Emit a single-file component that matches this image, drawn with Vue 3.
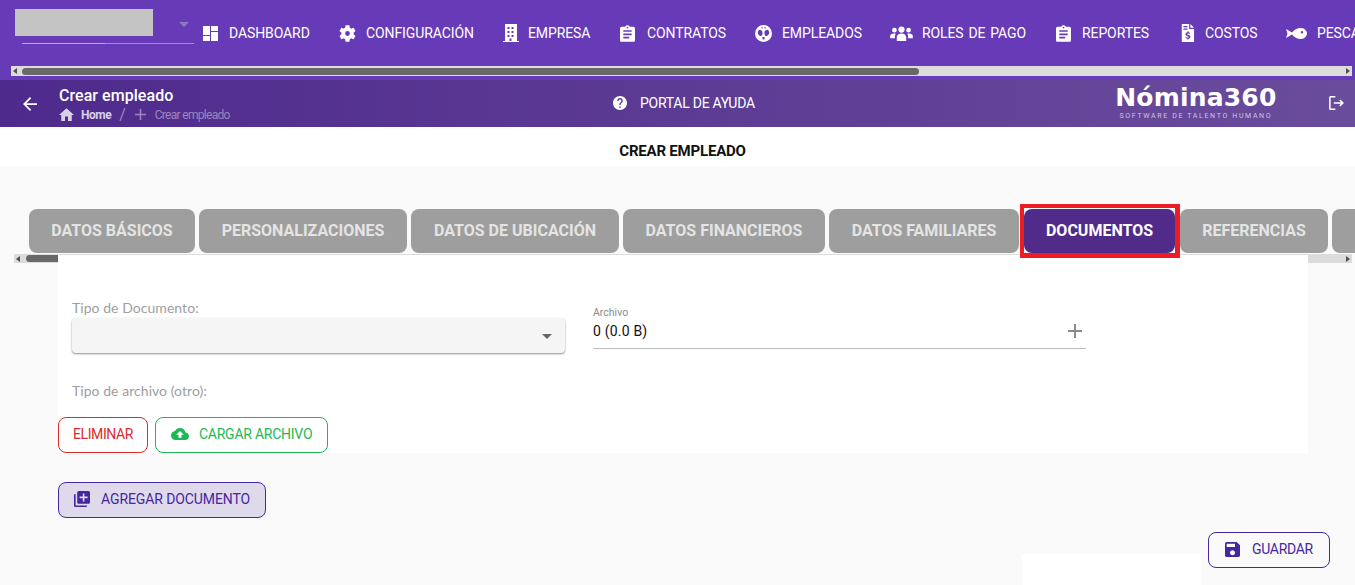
<script setup>
const clipboard = 'M19 3h-4.18C14.4 1.84 13.3 1 12 1c-1.3 0-2.4.84-2.82 2H5c-1.1 0-2 .9-2 2v14c0 1.1.9 2 2 2h14c1.1 0 2-.9 2-2V5c0-1.1-.9-2-2-2zm-7 0c.55 0 1 .45 1 1s-.45 1-1 1-1-.45-1-1 .45-1 1-1zm2 14H7v-2h7v2zm3-4H7v-2h10v2zm0-4H7V7h10v2z'
const menu = [
  { label: 'DASHBOARD', span: 136, box: 26, w: 15, h: 15, vb: '0 0 15 15', d: 'M0 0h7v9H0zM0 10h7v5H0zM8 0h7v5H8zM8 6h7v9H8z' },
  { label: 'CONFIGURACIÓN', span: 164, box: 27, w: 17, h: 17, vb: '2 2 20 20', d: 'M19.14 12.94c.04-.3.06-.61.06-.94 0-.32-.02-.64-.07-.94l2.03-1.58c.18-.14.23-.41.12-.61l-1.92-3.32c-.12-.22-.37-.29-.59-.22l-2.39.96c-.5-.38-1.03-.7-1.62-.94l-.36-2.54c-.04-.24-.24-.41-.48-.41h-3.84c-.24 0-.43.17-.47.41l-.36 2.54c-.59.24-1.13.57-1.62.94l-2.39-.96c-.22-.08-.47 0-.59.22L2.74 8.87c-.12.21-.08.47.12.61l2.03 1.58c-.05.3-.09.63-.09.94s.02.64.07.94l-2.03 1.58c-.18.14-.23.41-.12.61l1.92 3.32c.12.22.37.29.59.22l2.39-.96c.5.38 1.03.7 1.62.94l.36 2.54c.05.24.24.41.48.41h3.84c.24 0 .44-.17.47-.41l.36-2.54c.59-.24 1.13-.56 1.62-.94l2.39.96c.22.08.47 0 .59-.22l1.92-3.32c.12-.22.07-.47-.12-.61l-2.01-1.58zM12 14.8a2.8 2.8 0 1 1 0-5.6 2.8 2.8 0 0 1 0 5.6z' },
  { label: 'EMPRESA', span: 117, box: 25, w: 16, h: 18, vb: '0 0 16 18', d: 'M2 0h12v17h2v1H0v-1h2V0zm2.5 3v2h2V3h-2zm4 0v2h2V3h-2zm-4 4v2h2V7h-2zm4 0v2h2V7h-2zm-4 4v2h2v-2h-2zm4 0v2h2v-2h-2zm-2 3.5V17h2v-2.5h-2z' },
  { label: 'CONTRATOS', span: 135, box: 27, w: 15, h: 17, vb: '3 1 18 20', d: clipboard },
  { label: 'EMPLEADOS', span: 135, box: 27, w: 17, h: 17, vb: '2 2 20 20', d: 'M12 2a10 10 0 1 0 0 20 10 10 0 0 0 0-20zM6.8 8c1.6-.9 3.6.3 4 2.400.3 2-.4 4.200-1.800 4.500-1.500.3-3-1-3.500-2.800C5 10.500 5.500 8.800 6.800 8zm10.400 0c1.300.8 1.800 2.500 1.300 4.100-.5 1.800-2 3.100-3.500 2.800-1.400-.3-2.100-2.500-1.800-4.500.4-2.100 2.400-3.300 4-2.400zM10.500 16h3l-.5 3h-2l-.5-3zM9.500 4.500h1.500V6H9.500V4.500zm3.500 0h1.500V6H13V4.500z' },
  { label: 'ROLES DE PAGO', span: 166, box: 32, w: 23, h: 17, vb: '0 3 24 18', d: 'M12 4.5a3.3 3.3 0 1 1 0 6.6 3.3 3.3 0 0 1 0-6.600zM4.500 6a2.500 2.500 0 1 1 0 5 2.500 2.500 0 0 1 0-5zm15 0a2.500 2.500 0 1 1 0 5 2.500 2.500 0 0 1 0-5zM7 20v-4c0-2.500 2-4 5-4s5 1.500 5 4v4H7zM0 17v-2c0-2 1.500-3 4-3 .8 0 1.500.1 2 .3-.7.8-1 1.800-1 2.700v2H0zm24 0h-5v-2c0-.9-.3-1.900-1-2.700.5-.2 1.200-.3 2-.3 2.500 0 4 1 4 3v2z' },
  { label: 'REPORTES', span: 124, box: 26, w: 15, h: 17, vb: '3 1 18 20', d: clipboard },
  { label: 'COSTOS', span: 106, box: 25, w: 15, h: 18, vb: '4 1 16 22', d: 'M5 1h9v6h6v16H5V1zm10.500 0L20 5.500h-4.500V1zM7 3.500v1.500h5V3.500H7zm0 3v1.500h5V6.500H7zM12 10v1.200c-1.500.2-2.500 1.100-2.500 2.300 0 1.500 1.300 2 2.700 2.400 1 .3 1.300.5 1.300 1 0 .4-.5.7-1.400.7-.8 0-1.500-.3-2-.8l-.7 1.100c.6.6 1.500 1 2.500 1.100V20h1.300v-1.100c1.500-.2 2.400-1.100 2.400-2.300 0-1.500-1.300-2-2.700-2.400-1-.3-1.300-.5-1.300-1 0-.4.5-.7 1.200-.7.6 0 1.200.2 1.700.6l.7-1.100c-.5-.4-1.200-.7-2-.8V10H12z' },
  { label: 'PESCA', span: 120, box: 31, w: 21, h: 11, vb: '0 0 21 11', d: 'M0 1l6 3.500C8 2 11 0 15 0c3.500 0 6 3 6 5.500S18.500 11 15 11c-4 0-7-2-9-4.500L0 10l1.500-4.500L0 1zm16 2a1.200 1.200 0 1 0 0 2.400 1.200 1.200 0 0 0 0-2.400z' }
]
const tabs = [
  { label: 'DATOS BÁSICOS', width: 166 },
  { label: 'PERSONALIZACIONES', width: 208 },
  { label: 'DATOS DE UBICACIÓN', width: 208 },
  { label: 'DATOS FINANCIEROS', width: 202 },
  { label: 'DATOS FAMILIARES', width: 190 },
  { label: 'DOCUMENTOS', width: 151, active: true },
  { label: 'REFERENCIAS', width: 148 },
  { label: '', width: 100 }
]
</script>

<template>
  <div class="page">
    <nav class="topnav">
      <div class="topnav-row">
        <div class="company">
          <div class="company-box"></div>
          <span class="company-arrow"></span>
        </div>
        <a v-for="m in menu" :key="m.label" class="nav-item" :style="{ width: m.span + 'px' }">
          <span class="nav-icon" :style="{ width: m.box + 'px' }">
            <svg :width="m.w" :height="m.h" :viewBox="m.vb" fill="#fff"><path :d="m.d" fill-rule="evenodd" /></svg>
          </span>
          <span>{{ m.label }}</span>
        </a>
      </div>
      <div class="hbar top-bar"><i class="arrow-l"></i><b class="thumb top-thumb"></b><i class="arrow-r"></i></div>
    </nav>

    <header class="subbar">
      <button class="back">
        <svg width="14" height="14" viewBox="4 4 16 16" fill="#fff"><path d="M20 11H7.83l5.59-5.59L12 4l-8 8 8 8 1.41-1.41L7.83 13H20v-2z" /></svg>
      </button>
      <div class="crumbs">
        <div class="crumbs-title">Crear empleado</div>
        <div class="crumbs-path">
          <svg width="15" height="13" viewBox="2 3 20 17" fill="#d9d2e6"><path d="M10 20v-6h4v6h5v-8h3L12 3 2 12h3v8z" /></svg>
          <span class="home">Home</span>
          <span class="sep">/</span>
          <svg width="11" height="11" viewBox="5 5 14 14" fill="#9b86bd"><path d="M19 13h-6v6h-2v-6H5v-2h6V5h2v6h6v2z" /></svg>
          <span class="current">Crear empleado</span>
        </div>
      </div>
      <a class="help">
        <svg width="14" height="14" viewBox="2 2 20 20" fill="#fff"><path d="M12 2C6.48 2 2 6.48 2 12s4.48 10 10 10 10-4.48 10-10S17.52 2 12 2zm1 17h-2v-2h2v2zm2.07-7.75l-.9.92C13.45 12.9 13 13.5 13 15h-2v-.5c0-1.1.45-2.1 1.17-2.83l1.24-1.26c.37-.36.59-.86.59-1.41 0-1.1-.9-2-2-2s-2 .9-2 2H8c0-2.21 1.79-4 4-4s4 1.79 4 4c0 .88-.36 1.68-.93 2.25z" /></svg>
        <span>PORTAL DE AYUDA</span>
      </a>
      <div class="logo">
        <div class="logo-name">Nómina360</div>
        <div class="logo-sub">SOFTWARE DE TALENTO HUMANO</div>
      </div>
      <button class="logout">
        <svg width="15" height="14" viewBox="3 3 19 18" fill="#fff"><path d="M5 5h6V3H5a2 2 0 0 0-2 2v14a2 2 0 0 0 2 2h6v-2H5V5zm17 7l-4.500-4.500-1.400 1.400L18.200 11H9v2h9.200l-2.100 2.100 1.400 1.400L22 12z" /></svg>
      </button>
    </header>

    <div class="page-title">CREAR EMPLEADO</div>

    <main class="body">
      <div class="tabs">
        <button
          v-for="t in tabs"
          :key="t.label"
          class="tab"
          :class="{ active: t.active }"
          :style="{ width: t.width + 'px' }"
        >{{ t.label }}</button>
      </div>
      <div class="hbar tabs-bar"><i class="arrow-l"></i><b class="thumb tabs-thumb"></b><i class="arrow-r"></i></div>

      <section class="card">
        <div class="form-row">
          <div class="field-select">
            <label>Tipo de Documento:</label>
            <div class="select"><span class="select-arrow"></span></div>
          </div>
          <div class="field-file">
            <label>Archivo</label>
            <div class="file-line">
              <span>0 (0.0 B)</span>
              <svg width="14" height="14" viewBox="5 5 14 14" fill="#8a8a8a"><path d="M19 13h-6v6h-2v-6H5v-2h6V5h2v6h6v2z" /></svg>
            </div>
          </div>
        </div>
        <div class="other-label">Tipo de archivo (otro):</div>
        <div class="actions">
          <button class="btn btn-red">ELIMINAR</button>
          <button class="btn btn-green">
            <svg width="18" height="14" viewBox="0 4 24 16" fill="#1db954"><path d="M19.35 10.04C18.67 6.59 15.64 4 12 4 9.11 4 6.6 5.64 5.35 8.04 2.34 8.36 0 10.91 0 14c0 3.31 2.69 6 6 6h13c2.76 0 5-2.24 5-5 0-2.64-2.05-4.78-4.65-4.96zM14 13v4h-4v-4H7l5-5 5 5h-3z" /></svg>
            CARGAR ARCHIVO
          </button>
        </div>
      </section>

      <button class="btn btn-add">
        <svg width="16" height="16" viewBox="2 2 20 20" fill="#4527a0"><path d="M4 6H2v14c0 1.1.9 2 2 2h14v-2H4V6zm16-4H8c-1.1 0-2 .9-2 2v12c0 1.1.9 2 2 2h12c1.1 0 2-.9 2-2V4c0-1.1-.9-2-2-2zm-1 9h-4v4h-2v-4H9V9h4V5h2v4h4v2z" /></svg>
        AGREGAR DOCUMENTO
      </button>

      <div class="footer-row">
        <div class="white-patch"></div>
        <button class="btn btn-save">
          <svg width="15" height="15" viewBox="3 3 18 18" fill="#4527a0"><path d="M17 3H5c-1.11 0-2 .9-2 2v14c0 1.1.89 2 2 2h14c1.1 0 2-.9 2-2V7l-4-4zm-5 16c-1.66 0-3-1.34-3-3s1.34-3 3-3 3 1.34 3 3-1.34 3-3 3zm3-10H5V5h10v4z" /></svg>
          GUARDAR
        </button>
      </div>
    </main>
  </div>
</template>

<style>
html, body { margin: 0; overflow: hidden; }
</style>

<style scoped>
.page {
  width: 1355px;
  height: 585px;
  overflow: hidden;
  background: #fafafa;
  font-family: Roboto, "Liberation Sans", sans-serif;
}

.topnav {
  height: 80px;
  background: #673ab7;
  overflow: hidden;
}
.topnav-row {
  display: flex;
  height: 66px;
  white-space: nowrap;
}
.company {
  position: relative;
  flex: none;
  width: 203px;
}
.company-box {
  width: 138px;
  height: 27px;
  margin: 9px 0 0 15px;
  background: #c4c4c4;
}
.company::after {
  content: "";
  position: absolute;
  left: 22px;
  top: 43px;
  width: 172px;
  height: 1px;
  background: linear-gradient(90deg, #bcaed8 48%, #a48fcb 48%);
}
.company-arrow {
  position: absolute;
  left: 179px;
  top: 22px;
  border: 5px solid transparent;
  border-top-color: #8d78b8;
  border-bottom: 0;
}
.nav-item {
  flex: none;
  display: flex;
  align-items: center;
  height: 20px;
  margin-top: 23px;
  color: #fff;
  font-size: 14px;
  letter-spacing: -0.1px;
  word-spacing: 1.5px;
}
.nav-icon {
  flex: none;
  display: flex;
  align-items: center;
}

.hbar {
  display: flex;
  align-items: center;
  background: #dcdcdc;
  height: 10px;
  position: relative;
}
.top-bar { margin: 0 3px 0 11px; }
.thumb {
  display: block;
  height: 7px;
  background: #686868;
  border-radius: 4px;
}
.top-thumb { width: 897px; margin-left: 1px; }
.tabs-bar { margin: 1px 3px 0 14px; height: 9px; }
.tabs-thumb { width: 40px; margin-left: 2px; }
.arrow-l, .arrow-r {
  flex: none;
  width: 0;
  height: 0;
  border: 3px solid transparent;
}
.arrow-l { border-right: 4px solid #505050; border-left: 0; margin: 0 4px 0 2px; }
.arrow-r { position: absolute; right: 2px; border-left: 4px solid #505050; border-right: 0; }

.subbar {
  height: 47px;
  display: flex;
  align-items: center;
  background: linear-gradient(90deg, #4e2a8c, #6a4c9c);
  color: #fff;
}
.subbar button {
  background: none;
  border: 0;
  padding: 0;
  display: flex;
}
.back { margin: 0 0 0 23px; }
.crumbs { width: 300px; margin-left: 22px; padding-top: 2px; }
.crumbs-title {
  font-size: 16px;
  font-weight: 500;
  line-height: 18px;
  letter-spacing: 0.05px;
}
.crumbs-path {
  display: flex;
  align-items: center;
  gap: 6px;
  height: 16px;
  margin-top: 2px;
  font-size: 12px;
}
.home { margin-left: 1px; color: #d9d2e6; font-weight: 700; letter-spacing: -0.5px; }
.sep { color: #9b86bd; font-size: 16px; margin: 0 3px 0 2px; }
.current { color: #9b86bd; letter-spacing: -0.7px; margin-left: 3px; }
.help {
  display: flex;
  align-items: center;
  gap: 13px;
  margin: 0 0 2px 254px;
  font-size: 14px;
  letter-spacing: -0.25px;
  word-spacing: 0;
}
.logo {
  flex: none;
  width: 162px;
  margin: 0 0 2px 360px;
  text-align: center;
}
.logo-name {
  margin-bottom: 1px;
  font-family: "DejaVu Sans", sans-serif;
  font-size: 25px;
  font-weight: 700;
  line-height: 26px;
  letter-spacing: 0.2px;
  white-space: nowrap;
}
.logo-sub {
  color: #cfc5e0;
  font-size: 7px;
  line-height: 9px;
  letter-spacing: 1.65px;
  white-space: nowrap;
}
.subbar .logout { margin: 0 0 2px 52px; }

.page-title {
  height: 39px;
  padding-left: 10px;
  background: #fff;
  color: #111;
  font-size: 15px;
  font-weight: 700;
  line-height: 48px;
  text-align: center;
  letter-spacing: -0.2px;
}

.body {
  display: flex;
  flex-direction: column;
  align-items: stretch;
}
.tabs {
  position: relative;
  z-index: 2;
  display: flex;
  gap: 4px;
  height: 44px;
  margin-top: 43px;
  padding-left: 29px;
  white-space: nowrap;
}
.tab {
  flex: none;
  height: 44px;
  padding: 0 0 2px;
  border: 0;
  border-radius: 8px;
  background: #9e9e9e;
  color: #e4e4e4;
  font-family: inherit;
  font-size: 16px;
  font-weight: 700;
}
.tab.active {
  position: relative;
  margin: 0 1px;
  background: #512b8a;
  color: #fff;
}
.tab.active::after {
  content: "";
  position: absolute;
  inset: -5px -5px -5px -4px;
  border: 4px solid #ed1c24;
  border-right-width: 5px;
  border-bottom-width: 5px;
}

.card {
  position: relative;
  height: 198px;
  margin: -8px 47px 0 58px;
  padding: 0;
  background: #fff;
}
.form-row {
  display: flex;
  padding: 44px 0 0 14px;
}
.field-select { width: 493px; }
.field-select label, .other-label {
  display: block;
  color: #9e9e9e;
  font-family: Lato, sans-serif;
  font-size: 14px;
  line-height: 18px;
  letter-spacing: 0.05px;
}
.select {
  position: relative;
  height: 35px;
  margin-top: 1px;
  background: #f5f5f5;
  border-radius: 4px;
  box-shadow: 0 1px 2px rgba(0, 0, 0, 0.45);
}
.select-arrow {
  position: absolute;
  right: 13px;
  top: 16px;
  border: 5px solid transparent;
  border-top-color: #666;
  border-bottom: 0;
}
.field-file {
  width: 493px;
  margin-left: 28px;
  padding-top: 8px;
}
.field-file label {
  display: block;
  color: #8a8a8a;
  font-size: 10.5px;
  line-height: 12px;
}
.file-line {
  display: flex;
  align-items: center;
  justify-content: space-between;
  height: 23px;
  padding: 0 4px 6px 0;
  border-bottom: 1px solid #bdbdbd;
  font-size: 14px;
  letter-spacing: 0.2px;
  color: #111;
}
.other-label { margin: 29px 0 0 14px; }
.actions {
  display: flex;
  gap: 7px;
  margin-top: 17px;
}
.btn {
  display: flex;
  align-items: center;
  height: 36px;
  padding: 0 14px 2px;
  background: transparent;
  border: 1px solid;
  border-radius: 8px;
  font-family: inherit;
  font-size: 14px;
  letter-spacing: -0.3px;
}
.btn svg { flex: none; }
.btn-red {
  width: 90px;
  color: #e02b2b;
  border-color: #e02b2b;
  background: #fff;
  letter-spacing: -0.4px;
}
.btn-green {
  gap: 10px;
  padding: 0 15px 2px;
  color: #1db954;
  border-color: #1db954;
  background: #fff;
  letter-spacing: -0.25px;
}
.btn-add {
  gap: 11px;
  align-self: flex-start;
  margin: 29px 0 0 58px;
  padding: 0 15px 2px;
  color: #4527a0;
  border-color: #4527a0;
  background: #dfdaeb;
  letter-spacing: -0.1px;
}
.footer-row {
  display: flex;
  justify-content: flex-end;
  margin: 14px 25px 0 0;
}
.white-patch {
  width: 179px;
  height: 40px;
  margin: 22px 7px 0 0;
  background: #fff;
}
.btn-save {
  gap: 12px;
  width: 122px;
  padding: 0 0 2px 16px;
  color: #4527a0;
  border-color: #4527a0;
}
</style>
